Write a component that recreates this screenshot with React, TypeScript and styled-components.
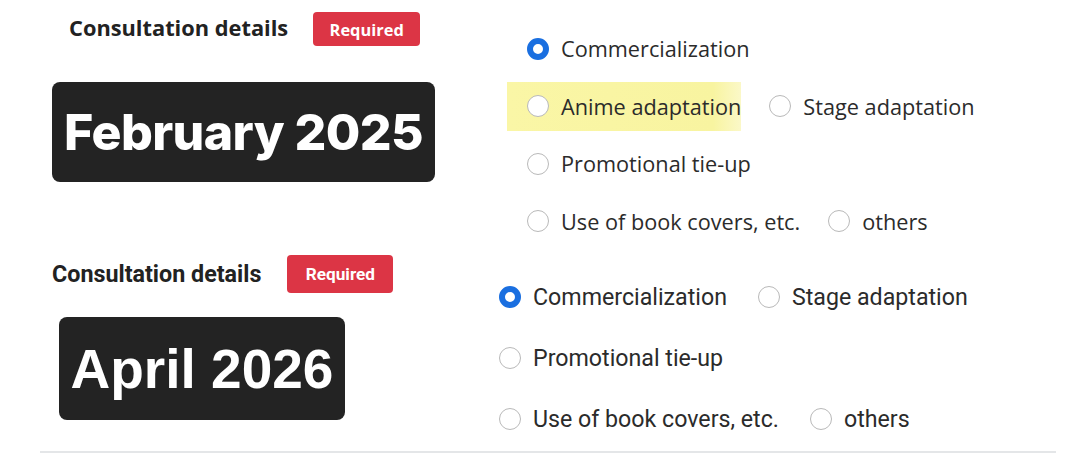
import React, { FC } from 'react';
import styled, { createGlobalStyle, css } from 'styled-components';

type Variant = 'open' | 'roboto';

interface Option {
  label: string;
  checked?: boolean;
  marked?: boolean;
}

interface SectionData {
  variant: Variant;
  date: string;
  rows: Option[][];
}

const sections: SectionData[] = [
  {
    variant: 'open',
    date: 'February 2025',
    rows: [
      [{ label: 'Commercialization', checked: true }],
      [{ label: 'Anime adaptation', marked: true }, { label: 'Stage adaptation' }],
      [{ label: 'Promotional tie-up' }],
      [{ label: 'Use of book covers, etc.' }, { label: 'others' }],
    ],
  },
  {
    variant: 'roboto',
    date: 'April 2026',
    rows: [
      [{ label: 'Commercialization', checked: true }, { label: 'Stage adaptation' }],
      [{ label: 'Promotional tie-up' }],
      [{ label: 'Use of book covers, etc.' }, { label: 'others' }],
    ],
  },
];

const fontFor = (v: Variant) =>
  v === 'open' ? '"Open Sans", "Noto Sans", sans-serif' : 'Roboto, "Liberation Sans", sans-serif';

const GlobalStyle = createGlobalStyle`
  html, body {
    margin: 0;
    padding: 0;
    background: #ffffff;
  }
`;

const Page = styled.div`
  width: 1080px;
  height: 460px;
  overflow: hidden;
  background: #ffffff;
`;

const Section = styled.section<{ $variant: Variant }>`
  display: flex;
  font-family: ${p => fontFor(p.$variant)};
  padding-left: 52px;
  ${p =>
    p.$variant === 'open'
      ? css`
          padding-top: 12px;
          height: 238px;
        `
      : css`
          padding-top: 5px;
          height: 196px;
        `}
`;

const LeftColumn = styled.div<{ $variant: Variant }>`
  display: flex;
  flex-direction: column;
  align-items: flex-start;
  flex-shrink: 0;
  width: ${p => (p.$variant === 'open' ? '475px' : '447px')};
  gap: ${p => (p.$variant === 'open' ? '36px' : '24px')};
`;

const Header = styled.div<{ $variant: Variant }>`
  display: flex;
  align-items: center;
  height: ${p => (p.$variant === 'open' ? '34px' : '38px')};
  gap: ${p => (p.$variant === 'open' ? '25px' : '26px')};
  margin-left: ${p => (p.$variant === 'open' ? '17px' : '0')};
`;

const Title = styled.h2<{ $variant: Variant }>`
  margin: 0;
  font-weight: 700;
  color: #222222;
  font-size: ${p => (p.$variant === 'open' ? '21.8px' : '23.3px')};
  margin-top: ${p => (p.$variant === 'open' ? '-4px' : '0')};
`;

const Badge = styled.span<{ $variant: Variant }>`
  display: flex;
  align-items: center;
  justify-content: center;
  height: 100%;
  box-sizing: border-box;
  width: ${p => (p.$variant === 'open' ? '107px' : '106px')};
  background: #dc3545;
  color: #ffffff;
  border-radius: 4px;
  font-weight: 700;
  font-size: ${p => (p.$variant === 'open' ? '16.4px' : '17.2px')};
`;

const DateBox = styled.div<{ $variant: Variant }>`
  display: flex;
  align-items: center;
  justify-content: center;
  background: #232323;
  color: #ffffff;
  border-radius: 8px;
  font-weight: 700;
  ${p =>
    p.$variant === 'open'
      ? css`
          width: 383px;
          height: 100px;
          font-family: Inter, sans-serif;
          font-weight: 800;
          font-size: 50px;
          letter-spacing: -0.6px;
        `
      : css`
          width: 286px;
          height: 103px;
          margin-left: 7px;
          font-family: 'Liberation Sans', Arial, sans-serif;
          font-size: 55px;
        `}
`;

const Choices = styled.div<{ $variant: Variant }>`
  display: flex;
  flex-direction: column;
  padding-top: ${p => (p.$variant === 'open' ? '8px' : '11px')};
`;

const ChoiceRow = styled.div<{ $variant: Variant }>`
  display: flex;
  align-items: center;
  height: ${p => (p.$variant === 'open' ? '57.5px' : '61px')};
  gap: ${p => (p.$variant === 'open' ? '28px' : '31px')};
`;

const Choice = styled.label<{ $variant: Variant; $marked?: boolean }>`
  display: flex;
  align-items: center;
  gap: ${p => (p.$variant === 'open' ? '12px' : '12px')};
  color: #2b2b2b;
  font-size: ${p => (p.$variant === 'open' ? '21.7px' : '23.2px')};
  ${p =>
    p.$marked &&
    css`
      height: 49px;
      padding-left: 20px;
      margin-left: -20px;
      background: linear-gradient(90deg, #faf6a6 0%, #f8f4a0 88%, #fbf8c8 100%);
    `}
`;

const Dot = styled.span<{ $checked?: boolean }>`
  box-sizing: border-box;
  width: 22px;
  height: 22px;
  border-radius: 50%;
  flex-shrink: 0;
  ${p =>
    p.$checked
      ? css`
          border: 6.5px solid #1a6fe0;
          background: #ffffff;
        `
      : css`
          border: 1.5px solid #b9b9b9;
          background: #ffffff;
        `}
`;

const Divider = styled.hr`
  margin: 0 24px 0 40px;
  border: none;
  border-top: 2px solid #e4e6e8;
`;

const ConsultationSection: FC<{ data: SectionData }> = ({ data }) => {
  const v = data.variant;
  return (
    <Section $variant={v}>
      <LeftColumn $variant={v}>
        <Header $variant={v}>
          <Title $variant={v}>Consultation details</Title>
          <Badge $variant={v}>Required</Badge>
        </Header>
        <DateBox $variant={v}>{data.date}</DateBox>
      </LeftColumn>
      <Choices $variant={v}>
        {data.rows.map((row, i) => (
          <ChoiceRow key={i} $variant={v}>
            {row.map(opt => (
              <Choice key={opt.label} $variant={v} $marked={opt.marked}>
                <Dot $checked={opt.checked} />
                {opt.label}
              </Choice>
            ))}
          </ChoiceRow>
        ))}
      </Choices>
    </Section>
  );
};

export default function App() {
  return (
    <Page>
      <GlobalStyle />
      {sections.map(s => (
        <ConsultationSection key={s.date} data={s} />
      ))}
      <Divider />
    </Page>
  );
}
